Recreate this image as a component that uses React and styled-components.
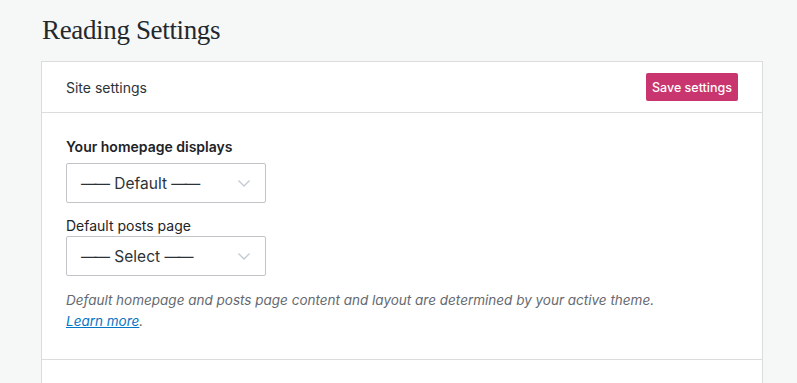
import React from 'react'
import styled, { createGlobalStyle } from 'styled-components'

const Global = createGlobalStyle`
  html, body {
    margin: 0;
    padding: 0;
    background: #f6f7f7;
    font-family: Inter, "Noto Sans", sans-serif;
    color: #2c3338;
  }
`;

const Page = styled.div`
  padding: 13px 34px 0 41px;
  height: 383px;
  overflow: hidden;
  box-sizing: border-box;
`;

const Title = styled.h1`
  margin: 0 0 14px 1px;
  font-family: "Liberation Serif", serif;
  font-weight: 400;
  font-size: 27px;
  line-height: 34px;
  letter-spacing: -0.35px;
  color: #23282d;
`;

const Card = styled.div`
  background: #fff;
  border: 1px solid #dcdcde;
  border-bottom: none;
`;

const CardHeader = styled.div`
  height: 51px;
  box-sizing: border-box;
  display: flex;
  align-items: center;
  justify-content: space-between;
  padding: 0 24px 0 24px;
  border-bottom: 1px solid #dcdcde;
  font-size: 14px;
  color: #2c3338;
`;

const SaveButton = styled.button`
  height: 28px;
  padding: 0 6px;
  border: none;
  border-radius: 2px;
  background: #c9356e;
  color: #fff;
  font-family: Inter, "Noto Sans", sans-serif;
  font-size: 12.5px;
  font-weight: 500;
`;

const CardBody = styled.div`
  padding: 24px 24px 0 24px;
  height: 247px;
  box-sizing: border-box;
  border-bottom: 1px solid #dcdcde;
`;

const Label = styled.div`
  font-size: 14px;
  font-weight: ${p => (p.$bold ? 600 : 400)};
  line-height: 20px;
  margin-bottom: ${p => p.$mb || 0}px;
  color: #1d2327;
`;

const Select = styled.div`
  width: 200px;
  height: 40px;
  box-sizing: border-box;
  border: 1px solid #c3c4c7;
  border-radius: 2px;
  display: flex;
  align-items: center;
  justify-content: space-between;
  padding: 0 14px 0 14px;
  font-size: 15.5px;
  color: #2c3338;
  margin-bottom: ${p => p.$mb || 0}px;
`;

const Dash = styled.span`
  letter-spacing: -2px;
  margin-right: 2px;
`;

const Chevron = () => (
  <svg width="14" height="14" viewBox="0 0 14 14" fill="none">
    <path d="M1.5 4.5 L7 10 L12.5 4.5" stroke="#c3cad3" strokeWidth="1.4" />
  </svg>
);

const Help = styled.p`
  margin: 14px 0 0;
  font-size: 13.5px;
  font-style: italic;
  line-height: 21px;
  color: #646970;
  a {
    color: #0675c4;
    text-decoration: underline;
  }
`;

const CardFooter = styled.div`
  height: 60px;
`;

export default function App() {
  return (
    <Page>
      <Global />
      <Title>Reading Settings</Title>
      <Card>
        <CardHeader>
          <span>Site settings</span>
          <SaveButton>Save settings</SaveButton>
        </CardHeader>
        <CardBody>
          <Label $bold $mb={6}>Your homepage displays</Label>
          <Select $mb={13}>
            <span><Dash>——</Dash> Default <Dash>——</Dash></span>
            <Chevron />
          </Select>
          <Label>Default posts page</Label>
          <Select>
            <span><Dash>——</Dash> Select <Dash>——</Dash></span>
            <Chevron />
          </Select>
          <Help>
            Default homepage and posts page content and layout are determined by your active theme.
            <br />
            <a href="#">Learn more</a>.
          </Help>
        </CardBody>
        <CardFooter />
      </Card>
    </Page>
  );
}
